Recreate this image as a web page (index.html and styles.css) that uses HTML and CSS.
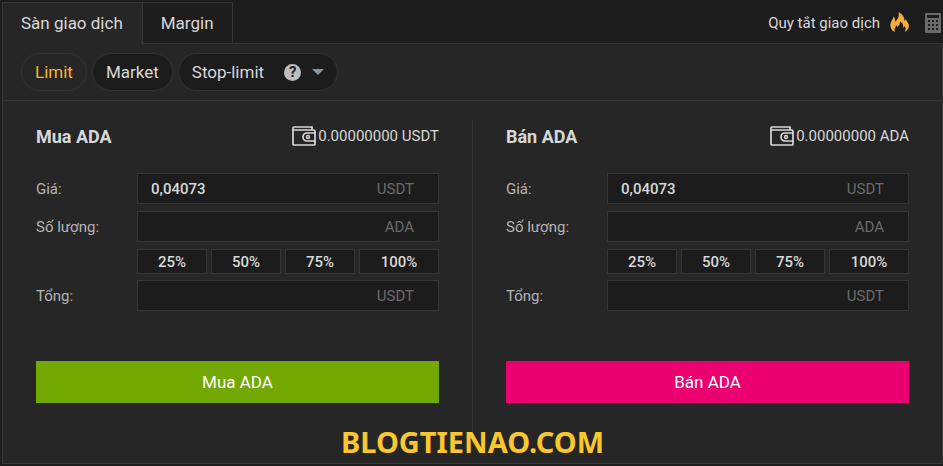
FILE: index.html
```
<!DOCTYPE html>
<html lang="vi">

<head>
    <meta charset="UTF-8">
    <meta name="viewport" content="width=device-width, initial-scale=1.0">
    <title>Sàn giao dịch ADA</title>
    <link rel="stylesheet" href="styles.css">
</head>

<body>
    <svg class="sprite" aria-hidden="true">
        <symbol id="wallet" viewBox="0 0 24 20">
            <path d="M20 3.500V1H2Q1 1 1 2v16q0 1 1 1h20q1 0 1-1v-3M1 4h20.500q1.500 0 1.500 1.500V7" fill="none" stroke="currentColor" stroke-width="1.700" />
            <path d="M23 7h-8a4 4 0 0 0 0 8h8z" fill="none" stroke="currentColor" stroke-width="1.700" />
            <circle cx="16" cy="11" r="1.500" fill="none" stroke="currentColor" stroke-width="1.400" />
        </symbol>
    </svg>

    <div class="exchange">
        <header class="top">
            <nav class="tabs">
                <a href="#" class="tab active">Sàn giao dịch</a>
                <a href="#" class="tab">Margin</a>
            </nav>
            <div class="tools">
                <a href="#" class="rules">Quy tắt giao dịch
                    <svg class="fire" viewBox="0 0 20 21" aria-hidden="true">
                        <path d="M5 20C1 18 0 15 .4 12 .8 9 3 8 3.500 4.500 5 6 5.300 7.500 5 9.500 8 7.500 9.500 4 8.500 0c4 2 6 5 6 9 1-.8 1.400-1.800 1.300-3 0 2 .8 2.800 2 4.600C20.500 14.500 18 18.500 14.500 20c1.300-2 1.500-4 .2-6.200-.2 1-.6 1.600-1.400 2 .2-2.800-.8-5-3.300-6.300.2 3-1.200 4-2.700 5.800-.1-.9-.4-1.500-1-2C5.800 15.500 3.800 17 5 20z" fill="#f2ae3a" />
                    </svg>
                </a>
                <a href="#" class="calc-link" aria-label="Calculator">
                    <svg class="calc" viewBox="0 0 16 20" aria-hidden="true">
                        <rect width="16" height="20" rx="1" fill="#6b6b6b" />
                        <path d="M2 2h12v3H2zM3 7h2v2H3zM7 7h2v2H7zM11 7h2v2h-2zM3 11h2v2H3zM7 11h2v2H7zM11 11h2v2h-2zM3 15h2v2H3zM7 15h2v2H7zM11 15h2v2h-2z" fill="#1d1d1d" />
                    </svg>
                </a>
            </div>
        </header>

        <main class="panel">
            <div class="types">
                <button type="button" class="pill active">Limit</button>
                <button type="button" class="pill">Market</button>
                <button type="button" class="pill">Stop-limit
                    <span class="help">?</span>
                    <span class="caret"></span>
                </button>
            </div>

            <div class="forms">
                <form class="order">
                    <div class="order-head">
                        <h2>Mua ADA</h2>
                        <div class="balance"><svg class="wallet" aria-hidden="true"><use href="#wallet" /></svg>0.00000000 USDT</div>
                    </div>
                    <div class="line">
                        <label for="buy-price">Giá:</label>
                        <div class="field"><input id="buy-price" type="text" value="0,04073"><span class="unit">USDT</span></div>
                    </div>
                    <div class="line">
                        <label for="buy-amount">Số lượng:</label>
                        <div class="field"><input id="buy-amount" type="text"><span class="unit">ADA</span></div>
                    </div>
                    <div class="percents">
                        <button type="button">25%</button>
                        <button type="button">50%</button>
                        <button type="button">75%</button>
                        <button type="button">100%</button>
                    </div>
                    <div class="line">
                        <label for="buy-total">Tổng:</label>
                        <div class="field"><input id="buy-total" type="text"><span class="unit">USDT</span></div>
                    </div>
                    <button type="button" class="submit buy">Mua ADA</button>
                </form>

                <form class="order">
                    <div class="order-head">
                        <h2>Bán ADA</h2>
                        <div class="balance"><svg class="wallet" aria-hidden="true"><use href="#wallet" /></svg>0.00000000 ADA</div>
                    </div>
                    <div class="line">
                        <label for="sell-price">Giá:</label>
                        <div class="field"><input id="sell-price" type="text" value="0,04073"><span class="unit">USDT</span></div>
                    </div>
                    <div class="line">
                        <label for="sell-amount">Số lượng:</label>
                        <div class="field"><input id="sell-amount" type="text"><span class="unit">ADA</span></div>
                    </div>
                    <div class="percents">
                        <button type="button">25%</button>
                        <button type="button">50%</button>
                        <button type="button">75%</button>
                        <button type="button">100%</button>
                    </div>
                    <div class="line">
                        <label for="sell-total">Tổng:</label>
                        <div class="field"><input id="sell-total" type="text"><span class="unit">USDT</span></div>
                    </div>
                    <button type="button" class="submit sell">Bán ADA</button>
                </form>
            </div>
            <div class="watermark">BLOGTIENAO.COM</div>
        </main>
    </div>
</body>

</html>
```
FILE: styles.css
```
* {
    box-sizing: border-box;
}

body {
    margin: 0;
    background: #1d1d1d;
    color: #d8d8d8;
    font-family: Roboto, sans-serif;
    font-size: 15px;
}

button,
input {
    font-family: inherit;
    color: inherit;
}

button {
    padding: 0;
    cursor: pointer;
}

a {
    color: inherit;
    text-decoration: none;
}

.sprite {
    position: absolute;
    width: 0;
    height: 0;
}

.exchange {
    padding: 2px 0 0 2px;
}

/* top bar */
.top {
    display: flex;
    justify-content: space-between;
    height: 41px;
}

.tabs {
    display: flex;
}

.tab {
    padding: 0 18px;
    border: 1px solid #363636;
    border-width: 1px 1px 0 0;
    font-size: 17px;
    line-height: 40px;
}

/* covers the panel border below it */
.tab.active {
    position: relative;
    z-index: 1;
    height: 42px;
    padding-right: 19px;
    border-left-width: 1px;
    background: #262626;
}

.tools {
    display: flex;
    align-items: center;
    gap: 15px;
    padding-right: 2px;
}

.rules {
    display: flex;
    align-items: center;
    gap: 10px;
}

.fire {
    width: 20px;
    height: 21px;
}

.calc-link {
    display: flex;
}

.calc {
    width: 16px;
    height: 20px;
}

/* panel */
.panel {
    position: relative;
    border: 1px solid #363636;
    background: #262626;
}

.types {
    display: flex;
    gap: 5px;
    padding: 9px 18px;
    border-bottom: 1px solid #363636;
}

.pill {
    display: flex;
    align-items: center;
    height: 38px;
    padding: 0 13px;
    border: 1px solid #333;
    border-radius: 19px;
    background: #1c1c1c;
    font-size: 17px;
}

.pill.active {
    background: #262626;
    color: #f9b52b;
}

.help {
    width: 17px;
    height: 17px;
    margin: 0 11px 0 20px;
    border-radius: 50%;
    background: #bdbdbd;
    color: #1c1c1c;
    font-size: 15px;
    font-weight: 700;
    line-height: 17px;
}

.caret {
    border: 6px solid transparent;
    border-top-color: #8a93a0;
    border-bottom: 0;
}

.forms {
    display: flex;
    padding: 19px 0 20px;
}

.order {
    flex: 1;
    padding: 0 33px 40px;
}

.order + .order {
    border-left: 1px solid #363636;
}

.order-head {
    display: flex;
    align-items: center;
    justify-content: space-between;
    height: 32px;
    margin-bottom: 21px;
}

h2 {
    margin: 0;
    font-size: 18px;
    font-weight: 700;
}

.balance {
    display: flex;
    align-items: center;
    gap: 2px;
}

.wallet {
    width: 24px;
    height: 20px;
}

.line {
    display: flex;
    align-items: center;
    margin-bottom: 7px;
}

.line label {
    width: 101px;
    color: #b5b5b5;
}

.field {
    flex: 1;
    display: flex;
    align-items: center;
    height: 31px;
    padding: 0 24px 0 13px;
    border: 1px solid #363636;
    background: #1c1c1c;
}

.field input {
    flex: 1;
    min-width: 0;
    padding: 0;
    border: 0;
    outline: 0;
    background: none;
    font-size: 15px;
    font-weight: 500;
}

.unit {
    color: #6a6a6a;
}

.percents {
    display: grid;
    grid-template-columns: 7fr 7fr 7fr 8fr;
    gap: 4px;
    margin: 0 0 6px 101px;
}

.percents button {
    height: 25px;
    border: 1px solid #363636;
    background: #1c1c1c;
    font-size: 15px;
    font-weight: 500;
}

.submit {
    width: 100%;
    height: 42px;
    margin-top: 43px;
    border: 0;
    color: #fff;
    font-size: 17px;
}

.buy {
    background: #72a800;
}

.sell {
    background: #eb0070;
}

.watermark {
    position: absolute;
    right: 0;
    bottom: 2px;
    left: 0;
    color: #f9c72e;
    font-family: "Noto Sans", sans-serif;
    font-size: 29px;
    font-weight: 700;
    text-align: center;
}
```
